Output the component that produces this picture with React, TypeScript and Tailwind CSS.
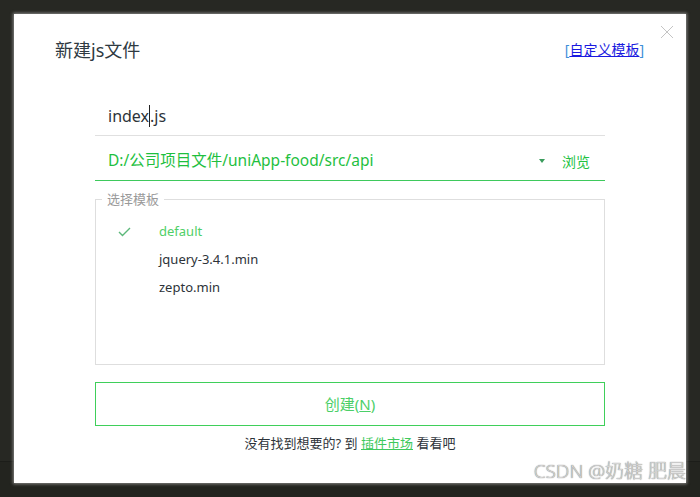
import type { ReactNode } from "react";

const templates = [
  { name: "default", active: true },
  { name: "jquery-3.4.1.min", active: false },
  { name: "zepto.min", active: false },
];

function CheckMark() {
  return (
    <svg width="13" height="10" viewBox="0 0 13 10" fill="none">
      <polyline
        points="1,5 4.5,8.5 12,1"
        stroke="#5cb87a"
        strokeWidth="1.4"
      />
    </svg>
  );
}

function CloseIcon() {
  return (
    <svg width="14" height="14" viewBox="0 0 14 14" fill="none">
      <line x1="1" y1="1" x2="13" y2="13" stroke="#c4c4c4" strokeWidth="1" />
      <line x1="13" y1="1" x2="1" y2="13" stroke="#c4c4c4" strokeWidth="1" />
    </svg>
  );
}

function Row({ children, className }: { children: ReactNode; className: string }) {
  return <div className={`flex items-center ${className}`}>{children}</div>;
}

export default function App() {
  return (
    <div
      className="relative h-[497px] w-[700px] overflow-hidden bg-[linear-gradient(to_bottom,#272823_461px,#1c1d19_461px,#1c1d19_462px,#23241f_462px)] pl-[14px] pt-[14px]"
      style={{ fontFamily: '"Noto Sans", "Noto Sans CJK SC", sans-serif' }}
    >
      <div className="relative flex h-[469px] w-[672px] flex-col bg-white pt-[24px] shadow-[0_0_3px_1px_rgba(200,200,200,0.6)]">
        <button className="absolute right-[12px] top-[11px]">
          <CloseIcon />
        </button>

        <Row className="h-[24px] justify-between pl-[41px] pr-[42px]">
          <span className="text-[18px] leading-[24px] text-[#2f3a42]">新建js文件</span>
          <span className="text-[14px] leading-[20px] text-[#3d8fd8]">
            [<span className="text-[#1a1ae0] underline">自定义模板</span>]
          </span>
        </Row>

        <div className="mx-[81px] mt-[34px] flex flex-col">
          <Row className="h-[40px] border-b border-[#e0e0e0] pl-[13px]">
            <span className="text-[16px] text-[#2d3339]">
              index<span className="border-l border-[#222]" />.js
            </span>
          </Row>

          <Row className="h-[45px] border-b border-[#3ec95c] pl-[13px] pr-[15px] pt-[6px]">
            <span className="flex-1 text-[15.5px] text-[#1fbf3f]">D:/公司项目文件/uniApp-food/src/api</span>
            <span className="mr-[17px] h-0 w-0 border-x-[3px] border-t-[4px] border-x-transparent border-t-[#3a9c5c]" />
            <span className="text-[14px] text-[#22c23f]">浏览</span>
          </Row>

          <fieldset className="mt-[10px] h-[174px] border border-[#dedede] pt-[11px]">
            <legend className="ml-[6px] px-[5px] text-[13px] leading-[16px] text-[#9a9a9a]">选择模板</legend>
            {templates.map((t) => (
              <Row key={t.name} className="h-[28px]">
                <span className="flex w-[63px] pl-[22px]">{t.active && <CheckMark />}</span>
                <span className={`text-[13px] ${t.active ? "text-[#4fcf67]" : "text-[#2d3339]"}`}>{t.name}</span>
              </Row>
            ))}
          </fieldset>

          <button className="mt-[17px] flex h-[44px] items-center justify-center border border-[#3fcf5a] text-[15px] text-[#4bcf68]">
            创建(<span className="underline">N</span>)
          </button>

          <p className="mt-[8px] text-center text-[13px] leading-[18px] text-[#2d3339]">
            没有找到想要的? 到 <span className="text-[#3ec95c] underline">插件市场</span> 看看吧
          </p>
        </div>
      </div>

      <span className="absolute bottom-[15px] right-[14px] text-[19px] font-light leading-[22px] text-[#d4d4d4] [text-shadow:0_0_1px_rgba(40,40,40,0.8)]">
        CSDN @奶糖 肥晨
      </span>
    </div>
  );
}
